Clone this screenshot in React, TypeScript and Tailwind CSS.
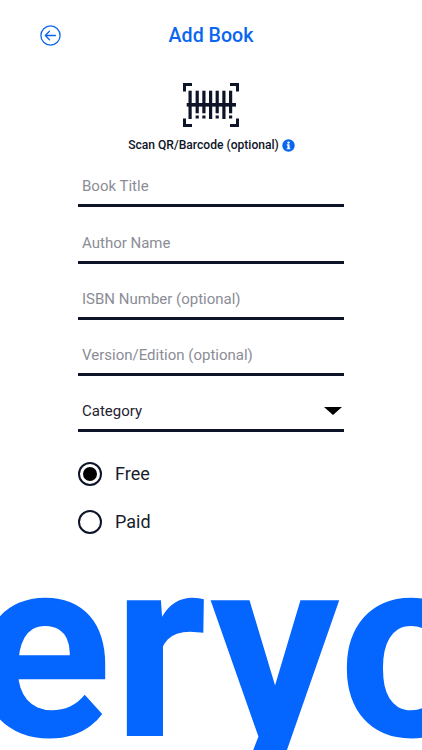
import React from "react";

function Field({ label }: { label: string }) {
  return (
    <div className="h-[56.25px] flex flex-col justify-end">
      <div className="flex items-center border-b-[3px] border-[#0e1428] pl-1 pb-[9px]">
        <span className="text-[15px] leading-[18px] text-[#8b8d96]">{label}</span>
      </div>
    </div>
  );
}

function Radio({ label, on }: { label: string; on?: boolean }) {
  return (
    <div className="flex items-center gap-[13px] h-[24px]">
      <span className="w-[24px] h-[24px] rounded-full border-2 border-[#0e1428] flex items-center justify-center">
        {on && <span className="w-[14px] h-[14px] rounded-full bg-black" />}
      </span>
      <span className="text-[18px] leading-none text-[#1a1d2b]">{label}</span>
    </div>
  );
}

export default function App() {
  return (
    <div className="relative w-[422px] h-[750px] overflow-hidden bg-white font-['Roboto',sans-serif]">
      <header className="h-[70px] px-[40px] flex items-center relative">
        <svg width="21" height="21" viewBox="0 0 21 21" fill="none" stroke="#0a66f0" strokeWidth="1.3">
          <circle cx="10.5" cy="10.5" r="9.6" />
          <path d="M15.5 10.5H5.5M9.5 6.3L5.3 10.5L9.5 14.7" strokeLinecap="round" strokeLinejoin="round" />
        </svg>
        <h1 className="flex-1 text-center pr-[21px] pt-[2px] text-[19.6px] font-medium text-[#0a66f0]">Add Book</h1>
      </header>

      <div className="flex flex-col items-center pt-[13px]">
        <svg width="56" height="44" viewBox="0 0 56 44" fill="none">
          <g stroke="#0e1428" strokeWidth="3">
            <path d="M9 1.5H1.5V8.5M47 1.5H54.5V8.5M1.5 35.5V42.5H9M54.5 35.5V42.5H47" />
          </g>
          <g fill="#0e1428">
            <rect x="3.7" y="20" width="49.3" height="3.6" />
            <rect x="5.5" y="7.7" width="3.2" height="28.3" />
            <rect x="12.6" y="7.7" width="3.2" height="22.6" />
            <rect x="19.3" y="7.7" width="3.2" height="22.6" />
            <rect x="26" y="7.7" width="3.2" height="28.3" />
            <rect x="32.6" y="7.7" width="3.2" height="22.6" />
            <rect x="39.3" y="7.7" width="3.2" height="28.3" />
            <rect x="46" y="7.7" width="3.2" height="22.6" />
            <rect x="12.6" y="32.5" width="3.2" height="3" />
            <rect x="19.3" y="32.5" width="3.2" height="3" />
            <rect x="32.6" y="32.5" width="3.2" height="3" />
            <rect x="46" y="32.5" width="3.2" height="3" />
          </g>
        </svg>
        <div className="mt-[10px] ml-[1px] flex items-center gap-[3px]">
          <span className="text-[12.1px] leading-[16px] font-medium text-[#0e1428]">Scan QR/Barcode (optional)</span>
          <svg width="13" height="13" viewBox="0 0 13 13">
            <circle cx="6.5" cy="6.5" r="6.2" fill="#0a66f0" />
            <rect x="5.5" y="5.4" width="2.1" height="4.6" fill="#fff" />
            <rect x="4.7" y="5.4" width="2" height="1" fill="#fff" />
            <rect x="4.7" y="9.2" width="3.7" height="1" fill="#fff" />
            <circle cx="6.5" cy="3.6" r="1.2" fill="#fff" />
          </svg>
        </div>
      </div>

      <div className="ml-[78px] w-[266px] mt-[-2px]">
        <Field label="Book Title" />
        <Field label="Author Name" />
        <Field label="ISBN Number (optional)" />
        <Field label="Version/Edition (optional)" />
        <div className="h-[56.25px] flex flex-col justify-end">
          <div className="flex items-center justify-between border-b-[3px] border-[#0e1428] pl-1 pr-[2px] pb-[9px]">
            <span className="text-[15px] leading-[18px] text-[#1f2230]">Category</span>
            <span className="w-0 h-0 border-l-[9px] border-r-[9px] border-t-[8px] border-l-transparent border-r-transparent border-t-black" />
          </div>
        </div>
      </div>

      <div className="ml-[78px] mt-[30px] flex flex-col gap-[24px]">
        <Radio label="Free" on />
        <Radio label="Paid" />
      </div>

      <div className="absolute left-[-27px] top-[520px] whitespace-nowrap text-[257px] leading-[257px] font-bold tracking-[1px] text-[#0565ff]">
        eryo
      </div>
    </div>
  );
}
